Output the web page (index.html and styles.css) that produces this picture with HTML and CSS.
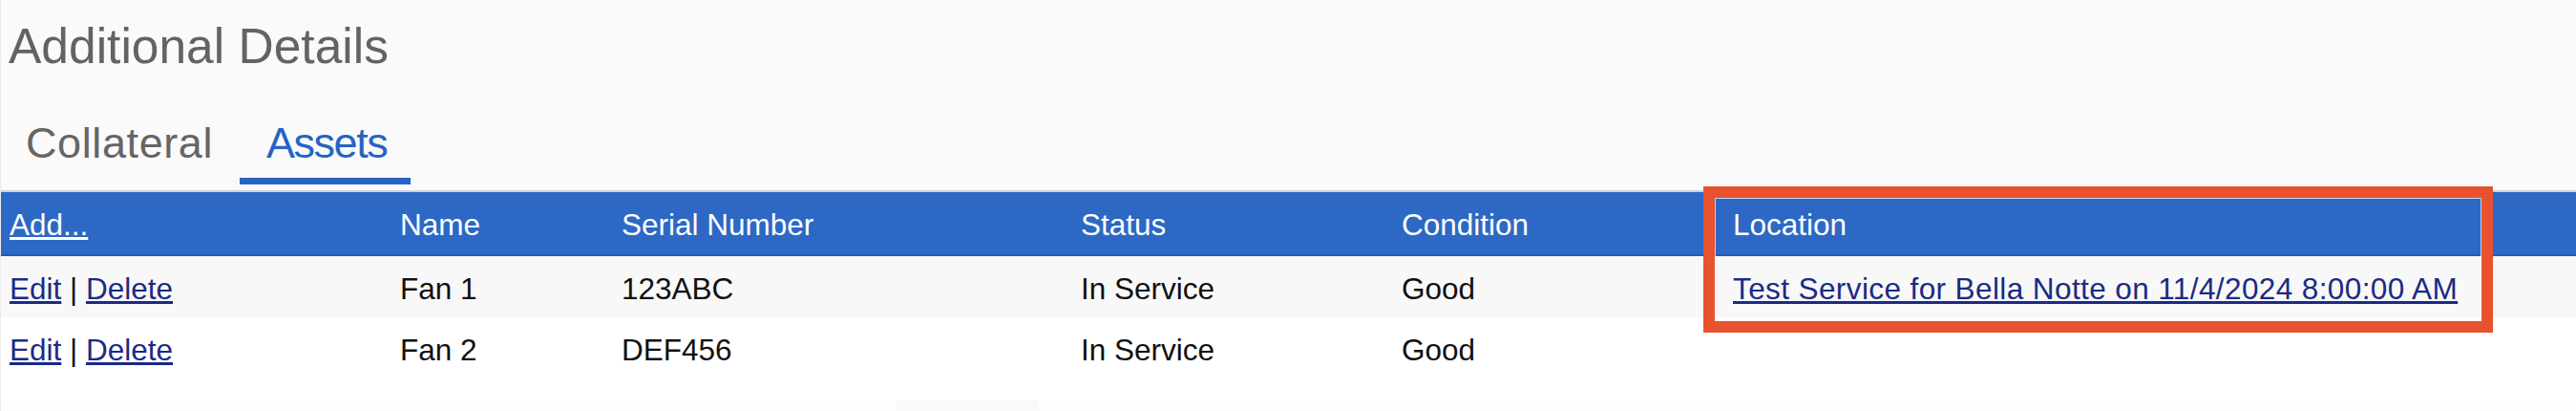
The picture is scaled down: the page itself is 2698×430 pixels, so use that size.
FILE: index.html
```html
<!DOCTYPE html>
<html lang="en">
<head>
<meta charset="utf-8">
<title>Additional Details</title>
<link rel="stylesheet" href="styles.css">
</head>
<body>
<div class="page">
  <h1 class="title">Additional Details</h1>
  <ul class="tabs">
    <li class="tab">Collateral</li>
    <li class="tab active">Assets</li>
  </ul>
  <div class="grid-wrap">
    <table class="grid">
      <colgroup>
        <col class="c-actions">
        <col class="c-name">
        <col class="c-serial">
        <col class="c-status">
        <col class="c-cond">
        <col class="c-loc">
      </colgroup>
      <thead>
        <tr>
          <th><a href="#" class="add">Add...</a></th>
          <th>Name</th>
          <th>Serial Number</th>
          <th>Status</th>
          <th>Condition</th>
          <th>Location</th>
        </tr>
      </thead>
      <tbody>
        <tr class="odd">
          <td><a href="#" class="lnk">Edit</a> | <a href="#" class="lnk">Delete</a></td>
          <td>Fan 1</td>
          <td>123ABC</td>
          <td>In Service</td>
          <td>Good</td>
          <td><a href="#" class="lnk loc">Test Service for Bella Notte on 11/4/2024 8:00:00 AM</a></td>
        </tr>
        <tr class="even">
          <td><a href="#" class="lnk">Edit</a> | <a href="#" class="lnk">Delete</a></td>
          <td>Fan 2</td>
          <td>DEF456</td>
          <td>In Service</td>
          <td>Good</td>
          <td></td>
        </tr>
      </tbody>
    </table>
    <div class="footer-strip"><span class="footer-block"></span></div>
  </div>
  <div class="highlight"></div>
</div>
</body>
</html>
```

FILE: styles.css
```css
html, body {
  margin: 0;
  padding: 0;
  background: #ffffff;
}

body {
  font-family: "Liberation Sans", Arial, sans-serif;
  width: 2698px;
  height: 430px;
  overflow: hidden;
}

.page {
  position: relative;
  background: #fafafa;
  border-left: 1px solid #ececec;
  height: 430px;
  box-sizing: border-box;
}

.title {
  margin: 0;
  padding: 18px 0 0 8px;
  font-size: 51.5px;
  line-height: 60px;
  font-weight: normal;
  color: #636363;
}

.tabs {
  display: flex;
  list-style: none;
  margin: 46px 0 0 0;
  padding: 0;
}

.tab {
  padding: 0 28px 10px 26px;
  font-size: 45px;
  line-height: 52px;
  color: #656565;
  border-bottom: 7px solid transparent;
  letter-spacing: 0.6px;
}

.tab.active {
  color: #2564c4;
  border-bottom-color: #2564c4;
  padding: 0 25px 10px 28px;
  letter-spacing: -1.5px;
}

.grid-wrap {
  margin-top: 6px;
  border-top: 2px solid #d2d2d2;
  background: #ffffff;
}

.grid {
  width: 100%;
  table-layout: fixed;
  border-collapse: collapse;
  font-size: 31.5px;
}

.c-actions { width: 409px; }
.c-name { width: 232px; }
.c-serial { width: 481px; }
.c-status { width: 336px; }
.c-cond { width: 347px; }
.c-loc { width: auto; }

.grid th {
  background: #2d68c4;
  color: #ffffff;
  font-weight: normal;
  text-align: left;
  padding: 16px 8px 13px 9px;
  line-height: 36px;
  border-bottom: 2px solid #1f5cbd;
  white-space: nowrap;
}

.grid td {
  padding: 16px 8px 12px 9px;
  line-height: 36px;
  color: #111111;
  white-space: nowrap;
}

.grid tr.odd td { background: #f8f8f8; }
.grid tr.even td { background: #ffffff; }

.add {
  color: #ffffff;
  text-decoration: underline;
}

.lnk {
  color: #1b2a86;
  text-decoration: underline;
}

.loc {
  letter-spacing: 0.4px;
}

.footer-strip {
  margin-top: 23px;
  height: 10px;
  background: #fdfdfd;
  padding-left: 937px;
}

.footer-block {
  display: block;
  width: 150px;
  height: 10px;
  background: #f8f8f8;
}

.highlight {
  position: absolute;
  left: 1783px;
  top: 195px;
  width: 827px;
  height: 153px;
  box-sizing: border-box;
  border: 12px solid #e9522e;
  box-shadow: inset 0 0 0 1px rgba(255, 255, 255, 0.7);
  pointer-events: none;
}
```
